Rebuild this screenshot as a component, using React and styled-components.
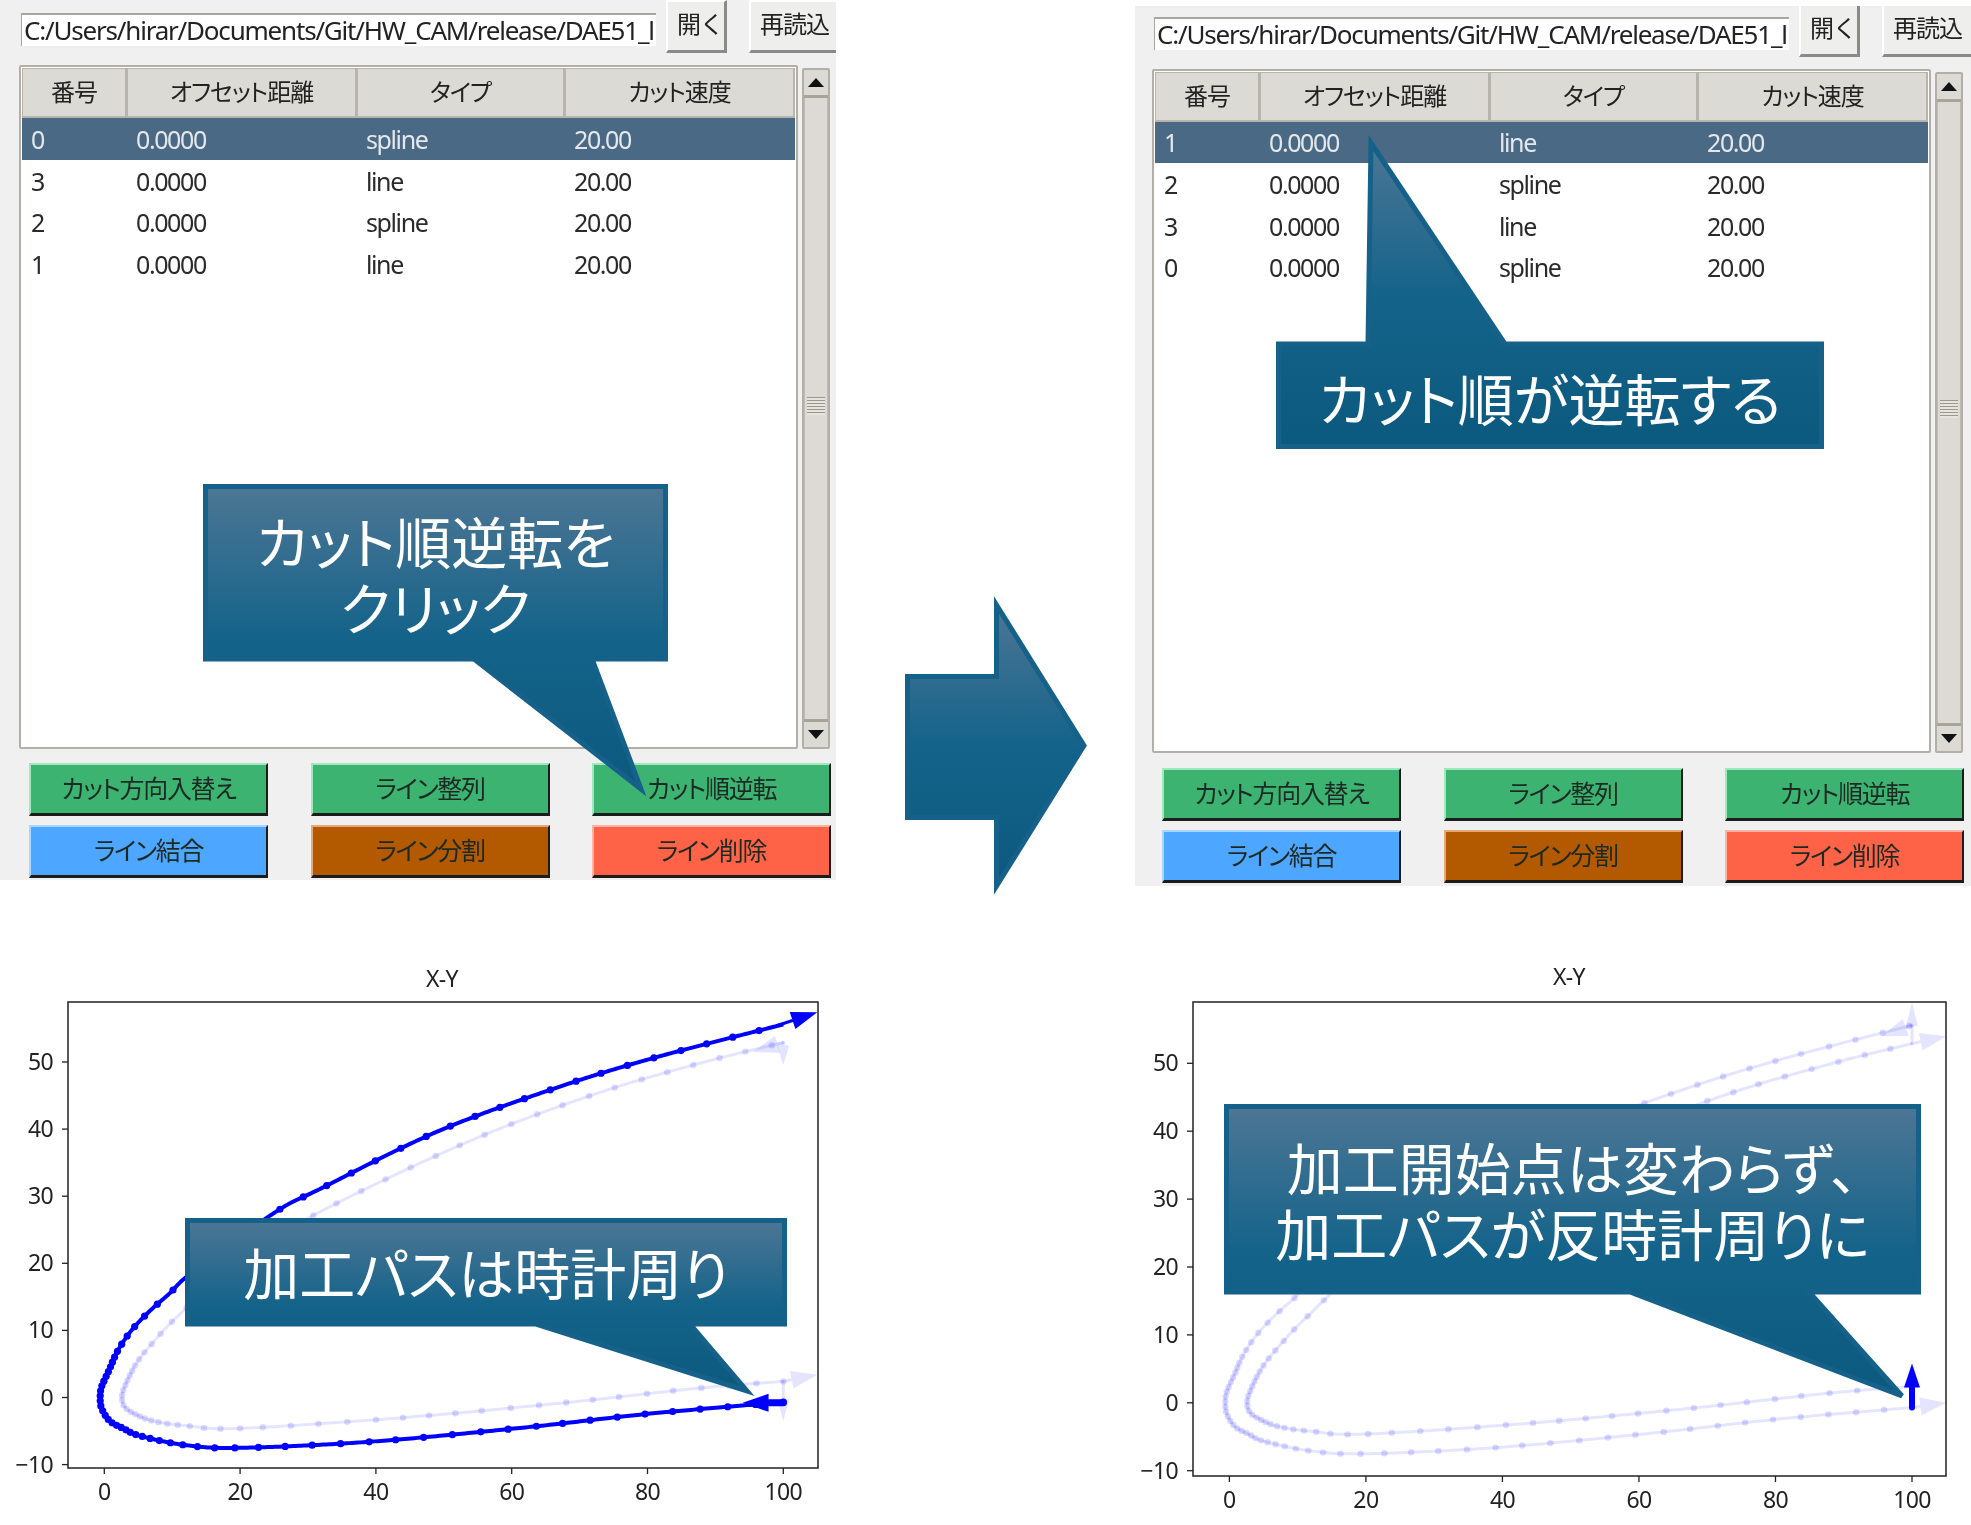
import styled, { createGlobalStyle } from 'styled-components';

const GlobalStyle = createGlobalStyle`
    html, body {
        margin: 0;
        padding: 0;
        background: #fff;
    }
    body {
        font-family: 'Noto Sans', 'Noto Sans CJK JP', sans-serif;
    }
`;

const Page = styled.div`
    position: relative;
    width: 1971px;
    height: 1525px;
    overflow: hidden;
    background: #fff;
    display: grid;
    grid-template-columns: 1135px 836px;
    grid-template-rows: 945px 580px;
`;

const Window = styled.div`
    width: 836px;
    height: 880px;
    margin-top: ${(props) => props.$top}px;
    background: #f0f0f0;
    overflow: hidden;
    filter: blur(0.55px);
    font-family: 'Noto Sans', 'Noto Sans CJK JP', sans-serif;
    color: #222;
`;

const Content = styled.div`
    margin-left: ${(props) => props.$dx}px;
    margin-top: ${(props) => props.$dy}px;
`;

const TopRow = styled.div`
    display: flex;
    align-items: flex-start;
    height: 53px;
    padding-left: 21px;
`;

const PathInput = styled.div`
    flex: none;
    width: 635px;
    height: 33px;
    margin-top: 13px;
    box-sizing: border-box;
    background: #fff;
    border-top: 2px solid #a8a6a0;
    border-left: 1px solid #a8a6a0;
    padding-left: 2px;
    font-size: 26px;
    line-height: 30px;
    letter-spacing: -1.2px;
    white-space: nowrap;
    overflow: hidden;
`;

const ToolButton = styled.div`
    flex: none;
    box-sizing: border-box;
    width: ${(props) => props.$width}px;
    height: 53px;
    margin-left: ${(props) => props.$gap}px;
    padding-left: 9px;
    background: #eeeeec;
    border-top: 2px solid #fff;
    border-left: 2px solid #fff;
    border-right: 3px solid #8a8a86;
    border-bottom: 3px solid #8a8a86;
    font-size: 24px;
    line-height: 44px;
    letter-spacing: -1px;
    white-space: nowrap;
`;

const ListRow = styled.div`
    display: flex;
    height: 684px;
    margin-top: 12px;
    padding-left: 19px;
`;

const TableFrame = styled.div`
    flex: none;
    width: 779px;
    box-sizing: border-box;
    padding: 1px;
    background: #fff;
    border: 2px solid #b3afa6;
    border-radius: 2px;
`;

const columns = '105px 230px 208px 230px';

const HeaderRow = styled.div`
    display: grid;
    grid-template-columns: ${columns};
    height: 50px;
`;

const HeaderCell = styled.div`
    box-sizing: border-box;
    background: #dcdad5;
    border: 1px solid #b8b4ab;
    border-right-width: 2px;
    border-bottom-width: 2px;
    font-size: 24px;
    font-feature-settings: 'palt';
    letter-spacing: -1px;
    line-height: 46px;
    text-align: center;
`;

const DataRow = styled.div`
    display: grid;
    grid-template-columns: ${columns};
    height: 41.7px;
    align-items: center;
    background: ${(props) => (props.$selected ? '#4a6984' : 'transparent')};
    color: ${(props) => (props.$selected ? '#e4e8ec' : '#2a2a2a')};
    font-size: 25px;
    letter-spacing: -1.4px;
`;

const DataCell = styled.div`
    padding-left: 9px;
`;

const ScrollBar = styled.div`
    flex: none;
    display: flex;
    flex-direction: column;
    width: 28px;
    margin-left: 4px;
    margin-top: 3px;
    box-sizing: border-box;
    border: 2px solid #b3afa6;
    border-radius: 2px;
    background: #dcdad5;
`;

const ScrollArrow = styled.div`
    flex: none;
    height: 25px;
    display: flex;
    align-items: center;
    justify-content: center;
    background: #dcdad5;
    border-top: ${(props) => (props.$down ? '3px solid #a8a49a' : 'none')};
    border-bottom: ${(props) => (props.$down ? 'none' : '3px solid #a8a49a')};
    &::after {
        content: '';
        border-left: 8px solid transparent;
        border-right: 8px solid transparent;
        border-top: ${(props) => (props.$down ? '9px solid #111' : 'none')};
        border-bottom: ${(props) => (props.$down ? 'none' : '9px solid #111')};
    }
`;

const ScrollThumb = styled.div`
    flex: 1;
    display: flex;
    align-items: center;
    justify-content: center;
    border: 1px solid #c0bdb5;
    border-width: 0 1px;
`;

const Grip = styled.div`
    width: 18px;
    height: 18px;
    margin-top: -6px;
    background: repeating-linear-gradient(
        #9b978d 0,
        #9b978d 1px,
        #e6e4df 1px,
        #e6e4df 3px
    );
`;

const ButtonGrid = styled.div`
    display: grid;
    grid-template-columns: repeat(3, 239px);
    grid-auto-rows: 53px;
    column-gap: 42.5px;
    row-gap: 9px;
    margin-top: ${(props) => props.$gap}px;
    padding-left: 29px;
`;

const ActionButton = styled.div`
    box-sizing: border-box;
    background: ${(props) => props.$color};
    border-top: 2px solid ${(props) => props.$light};
    border-left: 2px solid ${(props) => props.$light};
    border-right: 2px solid #1c1c1c;
    border-bottom: 3px solid #1c1c1c;
    font-size: 25px;
    font-feature-settings: 'palt';
    letter-spacing: -1.3px;
    line-height: 46px;
    text-align: center;
    color: #1d2a24;
`;

const ChartBox = styled.svg`
    display: block;
    width: ${(props) => props.$width}px;
    height: 580px;
    filter: blur(0.4px);
`;

const ChartText = styled.text`
    font-family: 'Noto Sans', sans-serif;
    font-size: 23px;
    letter-spacing: -0.6px;
    fill: #222;
`;

const CalloutBox = styled.div`
    position: absolute;
    left: ${(props) => props.$x}px;
    top: ${(props) => props.$y}px;
    width: ${(props) => props.$w}px;
    height: ${(props) => props.$h}px;
`;

const CalloutShape = styled.svg`
    position: absolute;
    inset: 0;
    width: 100%;
    height: 100%;
    overflow: visible;
`;

const CalloutLabel = styled.div`
    position: absolute;
    left: 0;
    right: 0;
    top: ${(props) => props.$top}px;
    height: ${(props) => props.$height}px;
    display: flex;
    align-items: center;
    justify-content: center;
    text-align: center;
    color: #fff;
    font-family: 'Noto Sans CJK JP', sans-serif;
    font-weight: 400;
    font-size: 56px;
    line-height: 66px;
    font-feature-settings: 'palt';
    white-space: nowrap;
`;

const Gradient = ({ id }) => (
    <defs>
        <linearGradient id={id} x1='0' y1='0' x2='0' y2='1'>
            <stop offset='0' stopColor='#4d7694' />
            <stop offset='0.5' stopColor='#14638a' />
            <stop offset='1' stopColor='#0c597e' />
        </linearGradient>
    </defs>
);

const Callout = ({ id, x, y, w, h, points, labelTop, labelHeight, children }) => (
    <CalloutBox $x={x} $y={y} $w={w} $h={h}>
        <CalloutShape viewBox={`0 0 ${w} ${h}`}>
            <Gradient id={id} />
            <polygon
                points={points}
                fill={`url(#${id})`}
                stroke='#15618a'
                strokeWidth='5'
                strokeLinejoin='miter'
            />
        </CalloutShape>
        <CalloutLabel $top={labelTop} $height={labelHeight}>
            <span>{children}</span>
        </CalloutLabel>
    </CalloutBox>
);

const GuiWindow = ({ top, dx, dy, buttonGap, rows }) => (
    <Window $top={top}>
        <Content $dx={dx} $dy={dy}>
            <TopRow>
                <PathInput>C:/Users/hirar/Documents/Git/HW_CAM/release/DAE51_l</PathInput>
                <ToolButton $width={61} $gap={10}>開く</ToolButton>
                <ToolButton $width={110} $gap={22}>再読込</ToolButton>
            </TopRow>
            <ListRow>
                <TableFrame>
                    <HeaderRow>
                        <HeaderCell>番号</HeaderCell>
                        <HeaderCell>オフセット距離</HeaderCell>
                        <HeaderCell>タイプ</HeaderCell>
                        <HeaderCell>カット速度</HeaderCell>
                    </HeaderRow>
                    {rows.map(([no, type], i) => (
                        <DataRow key={no} $selected={i === 0}>
                            <DataCell>{no}</DataCell>
                            <DataCell>0.0000</DataCell>
                            <DataCell>{type}</DataCell>
                            <DataCell>20.00</DataCell>
                        </DataRow>
                    ))}
                </TableFrame>
                <ScrollBar>
                    <ScrollArrow />
                    <ScrollThumb>
                        <Grip />
                    </ScrollThumb>
                    <ScrollArrow $down />
                </ScrollBar>
            </ListRow>
            <ButtonGrid $gap={buttonGap}>
                <ActionButton $color='#3cb371' $light='#9fe8bd'>カット方向入替え</ActionButton>
                <ActionButton $color='#3cb371' $light='#9fe8bd'>ライン整列</ActionButton>
                <ActionButton $color='#3cb371' $light='#9fe8bd'>カット順逆転</ActionButton>
                <ActionButton $color='#4da6ff' $light='#a9d6ff'>ライン結合</ActionButton>
                <ActionButton $color='#b35900' $light='#e5a878'>ライン分割</ActionButton>
                <ActionButton $color='#ff6347' $light='#ffb3a3'>ライン削除</ActionButton>
            </ButtonGrid>
        </Content>
    </Window>
);

// tool path in data units, one end of the U to the other
const outerPath = [
    [100, -0.7], [80.4, -2.4], [61.6, -4.5], [39, -6.6], [20, -7.5], [12, -7.1],
    [5.2, -5.7], [2.8, -4.6], [0.8, -3.5], [-0.4, -1.6], [-0.6, 0], [-0.4, 1.6],
    [0.8, 4.3], [2, 7], [4, 10], [6.6, 12.8], [9.6, 15.5], [13, 18.7], [25, 27.5],
    [32, 31.2], [49.2, 39.7], [67, 46.3], [81.6, 50.8], [100, 55.6],
];
const innerPath = [
    [100, 2.4], [87.6, 1.4], [67.6, -0.8], [44, -3], [20, -4.6], [12, -4.2],
    [7.2, -3.5], [4.4, -2.4], [3, -1.4], [2.6, -0.1], [3, 1.6], [4.8, 5.2],
    [7.6, 8.7], [11.2, 12.5], [20, 20.5], [32.4, 28], [54, 38.3], [72.8, 45.4],
    [88.4, 50], [100, 52.9],
];

const smooth = (pts) => {
    const out = [];
    for (let i = 0; i < pts.length - 1; i++) {
        const p0 = pts[Math.max(i - 1, 0)];
        const p1 = pts[i];
        const p2 = pts[i + 1];
        const p3 = pts[Math.min(i + 2, pts.length - 1)];
        for (let t = 0; t < 1; t += 0.02) {
            const f = (a, b, c, d) =>
                0.5 *
                (2 * b +
                    (c - a) * t +
                    (2 * a - 5 * b + 4 * c - d) * t * t +
                    (3 * b - a - 3 * c + d) * t * t * t);
            out.push([f(p0[0], p1[0], p2[0], p3[0]), f(p0[1], p1[1], p2[1], p3[1])]);
        }
    }
    out.push(pts[pts.length - 1]);
    return out;
};

// dots along the path, closer together round the tip of the U
const dotsOn = (line) => {
    const dots = [line[0]];
    let walked = 0;
    for (let i = 1; i < line.length; i++) {
        walked += Math.hypot(line[i][0] - line[i - 1][0], line[i][1] - line[i - 1][1]);
        const step = Math.max(5, Math.min(26, 1.2 * line[i][2] - 2));
        if (walked >= step) {
            dots.push(line[i]);
            walked = 0;
        }
    }
    return dots;
};

const Arrow = ({ from, to, width = 3, head = 26, wide = 9, color, opacity = 1 }) => {
    const dx = to[0] - from[0];
    const dy = to[1] - from[1];
    const len = Math.hypot(dx, dy);
    const ux = dx / len;
    const uy = dy / len;
    const bx = to[0] - ux * head;
    const by = to[1] - uy * head;
    const pts = [
        to,
        [bx - uy * wide, by + ux * wide],
        [bx + uy * wide, by - ux * wide],
    ];
    return (
        <g opacity={opacity}>
            <line x1={from[0]} y1={from[1]} x2={bx} y2={by} stroke={color} strokeWidth={width} strokeLinecap='round' />
            <polygon points={pts.map((p) => p.join(',')).join(' ')} fill={color} />
        </g>
    );
};

const Curve = ({ points, bold }) => {
    const dots = dotsOn(points);
    return (
        <g>
            <polyline
                points={points.map((p) => `${p[0]},${p[1]}`).join(' ')}
                fill='none'
                stroke='#0000ff'
                strokeOpacity={bold ? 1 : 0.1}
                strokeWidth={bold ? 4 : 3}
            />
            {dots.map((p, i) => (
                <circle key={i} cx={p[0]} cy={p[1]} r={bold ? 3.6 : 3.2} fill='#0000ff' fillOpacity={bold ? 1 : 0.14} />
            ))}
        </g>
    );
};

const Chart = ({ originX, box, title, x0, sx, y0, sy, width, bold, arrows }) => {
    const px = (u) => x0 + u * sx - originX;
    const py = (v) => y0 - v * sy - 945;
    const toPx = (pts) => smooth(pts).map(([u, v]) => [px(u), py(v), Math.hypot(u, v)]);
    const l = box.l - originX;
    const r = box.r - originX;
    const t = box.t - 945;
    const b = box.b - 945;
    return (
        <ChartBox $width={width} viewBox={`0 0 ${width} 580`}>
            <ChartText x={title[0] - originX} y={title[1] - 945} textAnchor='middle'>X-Y</ChartText>
            <rect x={l} y={t} width={r - l} height={b - t} fill='#fff' stroke='#222' strokeWidth='1.5' />
            {[0, 20, 40, 60, 80, 100].map((u) => (
                <g key={u}>
                    <line x1={px(u)} x2={px(u)} y1={b} y2={b + 6} stroke='#222' strokeWidth='1.3' />
                    <ChartText x={px(u)} y={b + 32} textAnchor='middle'>{u}</ChartText>
                </g>
            ))}
            {[-10, 0, 10, 20, 30, 40, 50].map((v) => (
                <g key={v}>
                    <line x1={l - 6} x2={l} y1={py(v)} y2={py(v)} stroke='#222' strokeWidth='1.3' />
                    <ChartText x={l - 15} y={py(v) + 8} textAnchor='end'>
                        {v < 0 ? `−${-v}` : v}
                    </ChartText>
                </g>
            ))}
            <Curve points={toPx(innerPath)} />
            <Curve points={toPx(outerPath)} bold={bold} />
            {arrows.map((a, i) => (
                <Arrow
                    key={i}
                    from={[px(a.from[0]), py(a.from[1])]}
                    to={[px(a.to[0]), py(a.to[1])]}
                    color='#0000ff'
                    opacity={a.bold ? 1 : 0.1}
                    width={a.width}
                    head={a.head}
                    wide={a.wide}
                />
            ))}
        </ChartBox>
    );
};

const leftRows = [['0', 'spline'], ['3', 'line'], ['2', 'spline'], ['1', 'line']];
const rightRows = [['1', 'line'], ['2', 'spline'], ['3', 'line'], ['0', 'spline']];

const leftArrows = [
    { from: [100, 2.4], to: [105, 3.4] },
    { from: [100, 2.4], to: [100, -3.5], head: 22, wide: 6 },
    { from: [100, 52.9], to: [95.5, 51.5] },
    { from: [100, 52.9], to: [100, 49.5], head: 20, wide: 6 },
    { from: [100, -0.8], to: [94, -0.8], bold: true, width: 7 },
    { from: [99, 55.4], to: [105, 57.4], bold: true, width: 3 },
];

const rightArrows = [
    { from: [100, 55.6], to: [100, 59], head: 24, wide: 6 },
    { from: [100, 55.6], to: [95.5, 54] },
    { from: [100, 52.9], to: [100, 55.6], head: 1, wide: 1 },
    { from: [100, 52.9], to: [105, 54] },
    { from: [100, -0.7], to: [105, 0] },
    { from: [100, -0.7], to: [100, 5.8], bold: true, width: 6, head: 24, wide: 8 },
];

const BigArrow = () => (
    <CalloutBox $x={905} $y={597} $w={182} $h={297}>
        <CalloutShape viewBox='0 0 182 297'>
            <Gradient id='bigArrow' />
            <polygon
                points='2.5,79.5 91.5,79.5 91.5,8 179,148.5 91.5,289 91.5,220.5 2.5,220.5'
                fill='url(#bigArrow)'
                stroke='#15618a'
                strokeWidth='5'
            />
        </CalloutShape>
    </CalloutBox>
);

const App = () => {
    return (
        <Page>
            <GlobalStyle />
            <GuiWindow top={0} dx={0} dy={0} buttonGap={14} rows={leftRows} />
            <GuiWindow top={6} dx={-2} dy={-2.5} buttonGap={15.3} rows={rightRows} />
            <Chart
                originX={0}
                width={1135}
                box={{ l: 68, r: 818, t: 1002, b: 1468 }}
                title={[442, 987]}
                x0={104.3}
                sx={6.79}
                y0={1397.5}
                sy={6.71}
                bold
                arrows={leftArrows}
            />
            <Chart
                originX={1135}
                width={836}
                box={{ l: 1193, r: 1946, t: 1002, b: 1476 }}
                title={[1569, 985]}
                x0={1229.4}
                sx={6.826}
                y0={1402.8}
                sy={6.79}
                arrows={rightArrows}
            />
            <Callout
                id='clickNote'
                x={203}
                y={484}
                w={465}
                h={305}
                points='2.5,2.5 462.5,2.5 462.5,175 389,175 438,305 271,175 2.5,175'
                labelTop={0}
                labelHeight={177}
            >
                カット順逆転を
                <br />
                クリック
            </Callout>
            <Callout
                id='reverseNote'
                x={1276}
                y={141}
                w={548}
                h={308}
                points='95,2 229,203 545.5,203 545.5,305.5 2.5,305.5 2.5,203 92,203'
                labelTop={203}
                labelHeight={105}
            >
                カット順が逆転する
            </Callout>
            <Callout
                id='clockwiseNote'
                x={185}
                y={1218}
                w={602}
                h={173}
                points='2.5,2.5 599.5,2.5 599.5,106 505,106 562,173 351,106 2.5,106'
                labelTop={0}
                labelHeight={106}
            >
                加工パスは時計周り
            </Callout>
            <Callout
                id='counterNote'
                x={1224}
                y={1104}
                w={697}
                h={292}
                points='2.5,2.5 694.5,2.5 694.5,188 585,188 678,292 406,188 2.5,188'
                labelTop={0}
                labelHeight={190}
            >
                加工開始点は変わらず、
                <br />
                加工パスが反時計周りに
            </Callout>
            <BigArrow />
        </Page>
    );
};

export default App;
